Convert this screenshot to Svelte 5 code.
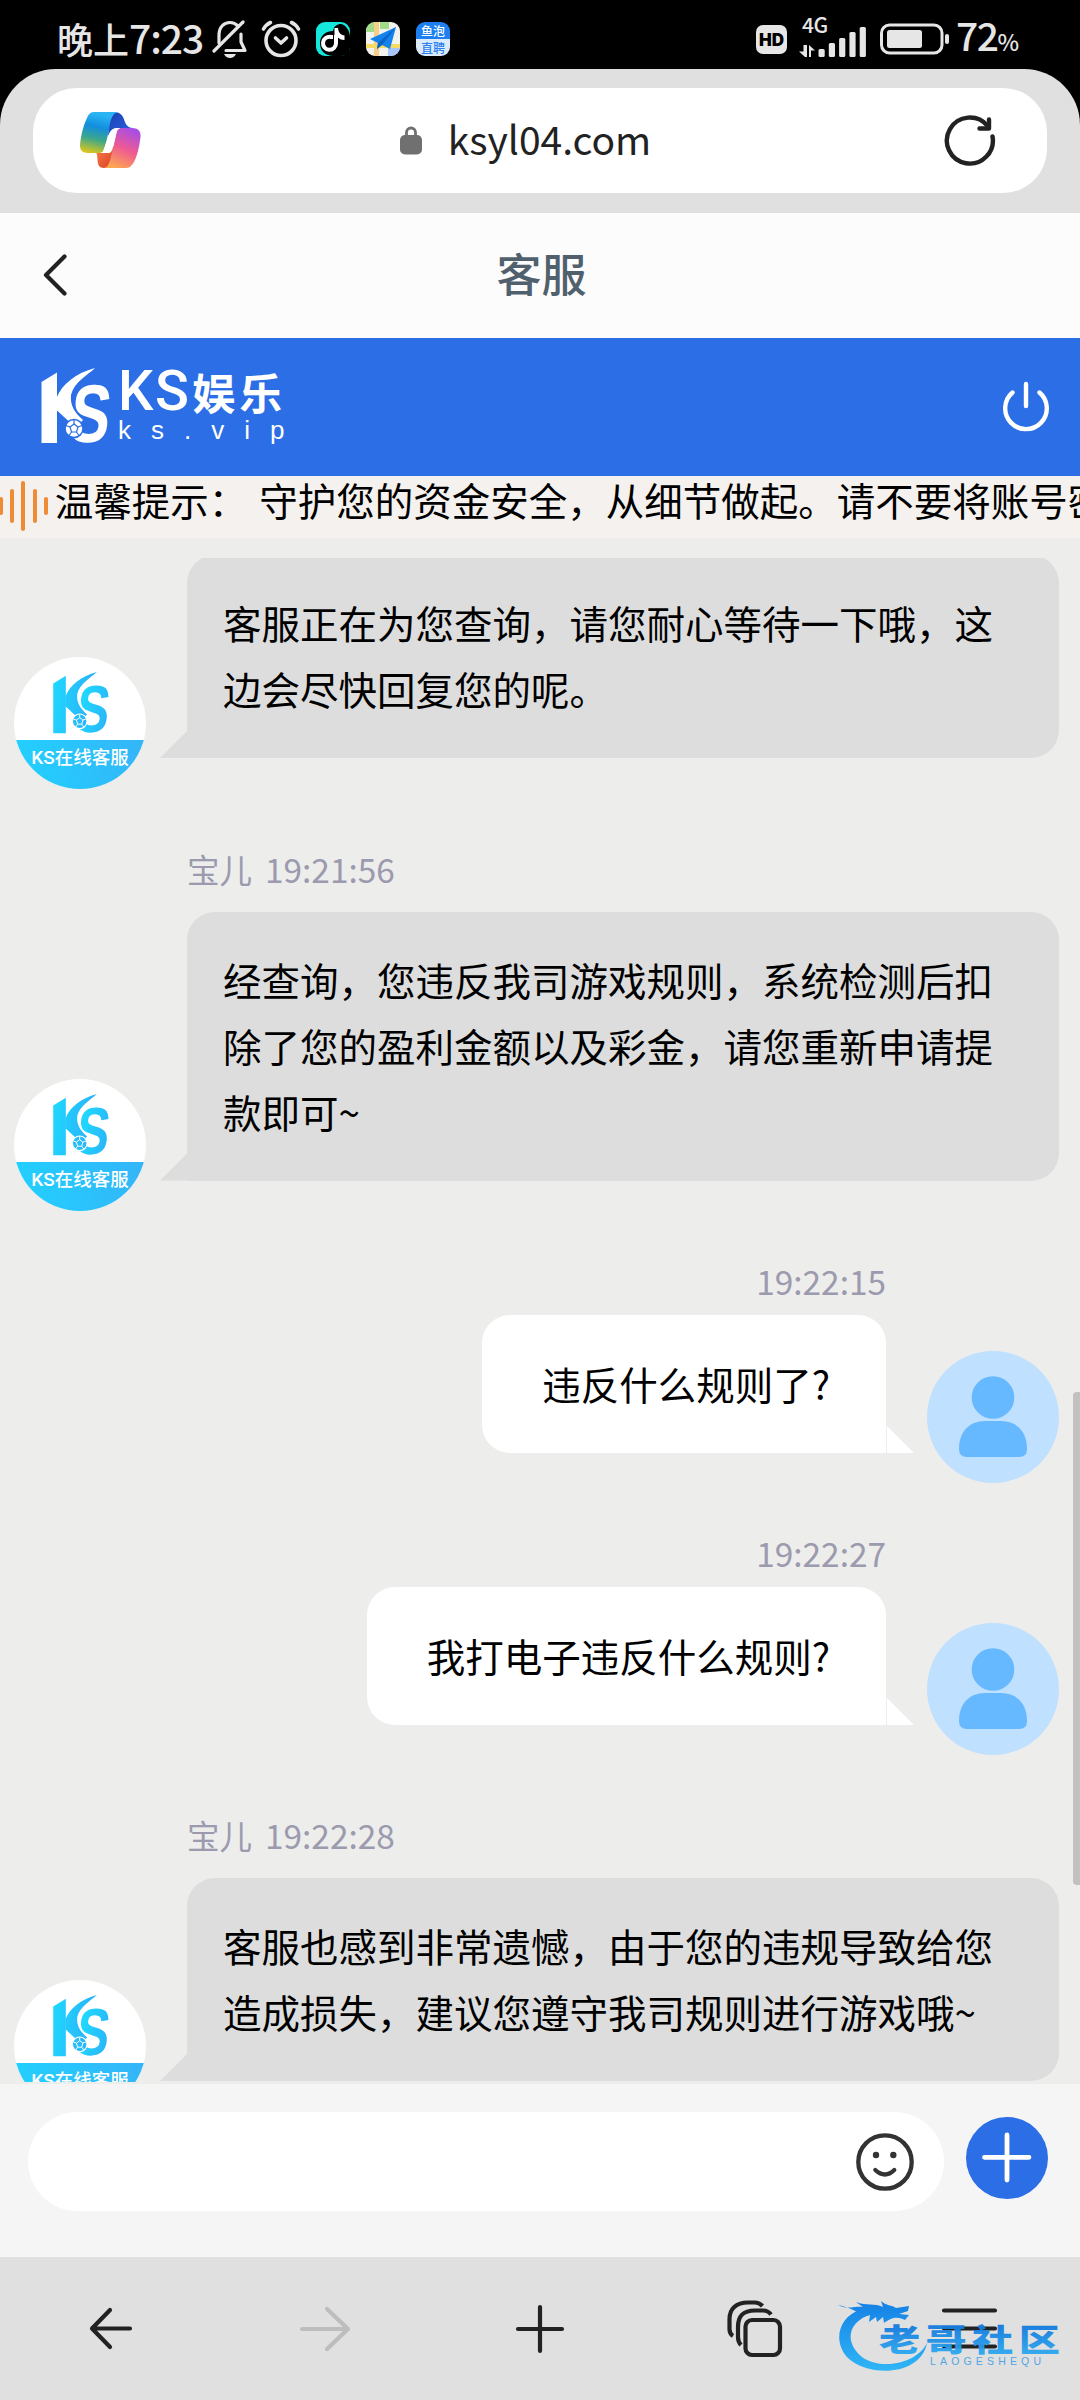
<script>
  const bars = [18, 34, 50, 34, 18];
  const signal = [8, 14, 19, 25, 30];

  let draft = $state("");
  let messages = $state([
    {
      from: "agent",
      text: "客服正在为您查询，请您耐心等待一下哦，这边会尽快回复您的呢。",
    },
    {
      from: "agent",
      name: "宝儿",
      time: "19:21:56",
      text: "经查询，您违反我司游戏规则，系统检测后扣除了您的盈利金额以及彩金，请您重新申请提款即可~",
    },
    { from: "user", time: "19:22:15", text: "违反什么规则了?" },
    { from: "user", time: "19:22:27", text: "我打电子违反什么规则?" },
    {
      from: "agent",
      name: "宝儿",
      time: "19:22:28",
      text: "客服也感到非常遗憾，由于您的违规导致给您造成损失，建议您遵守我司规则进行游戏哦~",
    },
  ]);
</script>

{#snippet logo(fill, edge)}
  <svg class="ks-logo" viewBox="0 0 70 76">
    <defs>
      <linearGradient id="ksBlue" gradientUnits="userSpaceOnUse" x1="0" y1="40" x2="70" y2="50">
        <stop offset="0" stop-color="#20d6ff" />
        <stop offset="1" stop-color="#2fa2f6" />
      </linearGradient>
    </defs>
    <g {fill}>
      <path d="M1.500 14 L17 4.500 V75 H1.500 Z" />
      <path d="M16.500 30 C22 16 36 5 55 0 C48 7 34 14 31 27 C30 37 34 44 43 52 L36 60 L16.500 42 Z" />
      <text
        class="logo-letter"
        transform="translate(27 73.500) skewX(-7) scale(0.74 1)"
        font-size="82"
        stroke={edge}
        stroke-width="3">S</text>
      <circle cx="34" cy="60.500" r="9" stroke={edge} stroke-width="1.500" />
    </g>
    <g fill="none" stroke={edge} stroke-width="1.200">
      <path d="M34 56 L38 59 L36.500 64 H31.500 L30 59 Z" />
      <path d="M34 56 V52 M38 59 L42 57.500 M36.500 64 L39 67.500 M31.500 64 L29 67.500 M30 59 L26 57.500" />
    </g>
  </svg>
{/snippet}

<div class="phone">
  <div class="status">
    <div class="status-left">
      <span class="clock"><span class="clock-cn">晚上</span>7:23</span>
      <svg class="bell" width="36" height="40" viewBox="0 0 36 40">
        <g fill="none" stroke="#e6e6e6" stroke-width="3.2" stroke-linecap="round" stroke-linejoin="round">
          <path d="M7 24 V16 C7 8 12 3.5 18 3.5 C21 3.5 24 5 26 7" />
          <path d="M29 15 V23 L33 31.500 H14" />
          <path d="M2 32 L31 3" />
        </g>
        <path d="M12 35 H24 Q22 39 18 39 Q14 39 12 35 Z" fill="#e6e6e6" />
      </svg>
      <svg class="alarm" width="40" height="40" viewBox="0 0 40 40">
        <g fill="none" stroke="#e6e6e6" stroke-width="3.6" stroke-linecap="round">
          <circle cx="20" cy="21.500" r="15" />
          <path d="M14.500 19 L20 24 L25.500 19" stroke-linejoin="round" />
          <path d="M2.500 10 Q5 5.500 9.500 3.500 M37.500 10 Q35 5.500 30.500 3.500" />
        </g>
      </svg>
      <svg class="tile" width="34" height="34" viewBox="0 0 34 34">
        <rect width="34" height="34" rx="9" fill="#14e8dc" />
        <path
          d="M4 21 C4 14 9 9 17 9 C18 4 21 2 25 2 C30 3 34 9 34 15 V25 Q34 34 25 34 H18 C9 34 4 29 4 21 Z"
          fill="#000" />
        <path
          d="M17 15 H15 A6.500 6.500 0 1 0 20 21 V13"
          fill="none"
          stroke="#fff"
          stroke-width="4" />
        <path d="M18.500 22 V6 H22 C22.500 11 25 13 28.500 13.500 V18 C25 18 23 16.500 22 15.500 V22 Z" fill="#fff" />
      </svg>
      <svg class="tile" width="34" height="34" viewBox="0 0 34 34">
        <clipPath id="mapTile"><rect width="34" height="34" rx="9" /></clipPath>
        <g clip-path="url(#mapTile)">
          <rect width="34" height="34" fill="#f2f2ee" />
          <rect width="9" height="10" fill="#9fdd87" />
          <rect x="14" width="9" height="7" fill="#9fdd87" />
          <rect x="8" width="5" height="34" fill="#f8cf86" />
          <rect y="22" width="34" height="4" fill="#f8dc62" />
          <rect x="22" y="26" width="12" height="8" fill="#a6c6fa" />
          <path d="M30 5 L4 17 L12 21 L11 27 L16 23 L24 27 Z" fill="#1583ee" />
          <path d="M30 5 L12 21 L11 27 L16 23 Z" fill="#0966c8" />
        </g>
      </svg>
      <div class="job-tile">
        <span>鱼泡</span>
        <span>直聘</span>
      </div>
    </div>
    <div class="status-right">
      <span class="hd">HD</span>
      <div class="network">
        <span class="net-type">4G</span>
        <svg width="68" height="36" viewBox="0 0 68 36">
          <path d="M6 24 H8 V36 H6 L0 30.500 H4.500 V24 Z M10 24 L16 29.500 H12 V36 H10 Z" fill="#e6e6e6" />
          {#each signal as h, i}
            <rect x={19.500 + i * 10.300} y={36 - h} width="6.200" height={h} rx="1.500" fill="#e6e6e6" />
          {/each}
        </svg>
      </div>
      <svg class="battery" width="70" height="32" viewBox="0 0 70 32">
        <rect x="1.500" y="2" width="60.500" height="28" rx="8" fill="none" stroke="#e6e6e6" stroke-width="3" />
        <rect x="7" y="7" width="35" height="18" rx="2.500" fill="#e6e6e6" />
        <rect x="65" y="11" width="4" height="10" rx="2" fill="#e6e6e6" />
      </svg>
      <span class="percent">72<small>%</small></span>
    </div>
  </div>

  <div class="browser">
    <div class="url-bar">
      <svg class="copilot" width="61" height="57" viewBox="0 0 61 57">
        <defs>
          <linearGradient id="cpLeft" x1="0.200" y1="0" x2="0" y2="1">
            <stop offset="0" stop-color="#2ab4f4" />
            <stop offset="0.300" stop-color="#128ede" />
            <stop offset="0.600" stop-color="#3da78a" />
            <stop offset="1" stop-color="#f5cb0a" />
          </linearGradient>
          <linearGradient id="cpRight" x1="0.700" y1="0" x2="0.300" y2="1">
            <stop offset="0" stop-color="#a54ee6" />
            <stop offset="0.500" stop-color="#ef5a92" />
            <stop offset="1" stop-color="#fda851" />
          </linearGradient>
          <linearGradient id="cpTop" x1="0" y1="0" x2="1" y2="1">
            <stop offset="0" stop-color="#1c3fae" />
            <stop offset="1" stop-color="#2a63ea" />
          </linearGradient>
          <linearGradient id="cpBottom" x1="0" y1="0" x2="1" y2="1">
            <stop offset="0" stop-color="#f98546" />
            <stop offset="1" stop-color="#d93d27" />
          </linearGradient>
        </defs>
        <path d="M33 0 C48 0 41 14 52 16 H38 C33 16 31 18 28 24 C29 10 30 3 36 0 Z" fill="url(#cpTop)" />
        <path d="M15 40 C20 42 14 56 24 56 H28 C31 52 33 46 34 34 L29 36 C27 40 26 41 22 41 Z" fill="url(#cpBottom)" />
        <path
          d="M15 0 H38 C33 1 31 6 29.500 14 C28 24 26 32 24 37 C23 40 22 41 19 41 H8 C1 41 0 37 0 33 C1 22 4 12 7 6 C9 1 11 0 15 0 Z"
          fill="url(#cpLeft)" />
        <path
          d="M42 16 H52 C59 16 61 20 60.500 25 C59 37 57 44 54 50 C51 55 49 56 45 56 H24 C28 55 29 52 31 45 L36 23 C37 18 38 16 42 16 Z"
          fill="url(#cpRight)" />
        <path d="M38 16 C32 16 30 19 28 25 L24 37 C23 40 22 41 20 41 H28 C31 41 32 39 33 35 L36 23 C37 18 38 16 41 16 Z" fill="#fff" />
      </svg>
      <div class="address">
        <svg width="22" height="29" viewBox="0 0 22 29">
          <path d="M6.500 11 V6.500 A4.500 4.500 0 0 1 15.500 6.500 V11" fill="none" stroke="#707070" stroke-width="2.800" />
          <rect y="9" width="22" height="19.500" rx="5" fill="#707070" />
        </svg>
        <span>ksyl04.com</span>
      </div>
      <svg class="reload" width="54" height="54" viewBox="0 0 54 54">
        <g fill="none" stroke="#222" stroke-width="4.400" stroke-linecap="round" stroke-linejoin="round">
          <path d="M49.500 22.500 A23 23 0 1 1 44.500 11.800" />
          <path d="M46 5.500 V14.500 H36.500" />
        </g>
      </svg>
    </div>
  </div>

  <div class="title-bar">
    <svg width="24" height="42" viewBox="0 0 24 42">
      <path d="M21.500 2.500 L3 21 L21.500 39.500" fill="none" stroke="#222" stroke-width="4.200" stroke-linecap="round" stroke-linejoin="round" />
    </svg>
    <h1>客服</h1>
  </div>

  <header>
    <div class="brand">
      {@render logo("#fff", "#2b6ee6")}
      <div class="brand-text">
        <strong>KS<b>娱乐</b></strong>
        <span>ks.vip</span>
      </div>
    </div>
    <svg class="power" width="48" height="52" viewBox="0 0 48 52">
      <g fill="none" stroke="#fff" stroke-width="4.400" stroke-linecap="round">
        <path d="M10.500 11.500 A20.800 20.800 0 1 0 37.500 11.500" />
        <path d="M24 3 V25" />
      </g>
    </svg>
  </header>

  <div class="notice">
    <div class="wave">
      {#each bars as h}
        <i style="height: {h}px"></i>
      {/each}
    </div>
    <p>温馨提示：<span>守护您的资金安全，从细节做起。请不要将账号密码</span></p>
  </div>

  <main>
    <div class="messages">
      {#each messages as msg}
        <div class="message {msg.from}">
          {#if msg.time}
            <div class="meta">
              {#if msg.name}<span>{msg.name}</span>{/if}
              <span class="time">{msg.time}</span>
            </div>
          {/if}
          <div class="row">
            {#if msg.from === "agent"}
              <div class="avatar">
                {@render logo("url(#ksBlue)", "#fff")}
                <div class="avatar-name"><span>KS</span>在线客服</div>
              </div>
            {/if}
            <div class="bubble">{msg.text}</div>
            {#if msg.from === "user"}
              <svg class="avatar" viewBox="0 0 132 132">
                <rect width="132" height="132" fill="#bfe0ff" />
                <circle cx="66" cy="46.500" r="21.300" fill="#66b8ff" />
                <path d="M32 98 C32 81 42 70 58 70 H74 C90 70 100 81 100 98 Q100 106 92 106 H40 Q32 106 32 98 Z" fill="#66b8ff" />
              </svg>
            {/if}
          </div>
        </div>
      {/each}
    </div>
    <div class="scrollbar"></div>
  </main>

  <div class="composer">
    <div class="field">
      <input type="text" bind:value={draft} />
      <svg width="60" height="60" viewBox="0 0 60 60">
        <circle cx="30" cy="30" r="26.700" fill="none" stroke="#333" stroke-width="4.300" />
        <circle cx="21" cy="23" r="3.200" fill="#333" />
        <circle cx="38.300" cy="23" r="3.200" fill="#333" />
        <path d="M20.300 38 Q30 47 39.300 38" fill="none" stroke="#333" stroke-width="4.200" stroke-linecap="round" />
      </svg>
    </div>
    <button class="add" aria-label="更多">
      <svg width="82" height="82" viewBox="0 0 82 82">
        <path d="M41 18 V63 M18.500 40.300 H63" stroke="#fff" stroke-width="4.800" stroke-linecap="round" />
      </svg>
    </button>
  </div>

  <nav>
    <svg viewBox="0 0 60 60">
      <path d="M50 29.500 H13 M30 11 L12 29.500 L30 48" />
    </svg>
    <svg viewBox="0 0 60 60" class="off">
      <path d="M7 30 H53 M32 10 L53 30 L32 50" />
    </svg>
    <svg viewBox="0 0 60 60">
      <path d="M30 8 V52 M8 30 H52" />
    </svg>
    <svg viewBox="0 0 60 60">
      <rect x="20.500" y="21" width="34.500" height="35" rx="6.500" />
      <path d="M46 15.500 Q43 11.500 38 11.500 H30 C18 11.500 13 17 13 28 V38 Q13 43 16 46" stroke-linecap="butt" />
      <path d="M37.500 7 Q34 3.500 30 3.500 H23 C11 3.500 4.500 10 4.500 20 V30 Q4.500 35 8 37" stroke-linecap="butt" />
    </svg>
    <svg viewBox="0 0 60 60">
      <path d="M4 11.500 H55 M4 29.500 H55 M4 47.500 H55" />
    </svg>
  </nav>

  <div class="watermark">
    <svg width="226" height="80" viewBox="0 0 226 80">
      <defs>
        <linearGradient id="wm" gradientUnits="userSpaceOnUse" x1="0" y1="5" x2="0" y2="78">
          <stop offset="0" stop-color="#0a7be6" />
          <stop offset="1" stop-color="#27b6f8" />
        </linearGradient>
        <linearGradient id="wmText" x1="0" y1="0" x2="0" y2="1">
          <stop offset="0.200" stop-color="#1278de" />
          <stop offset="1" stop-color="#32b2f3" />
        </linearGradient>
      </defs>
      <g fill="url(#wm)">
        <path d="M24 14 C-3 22 -6 53 15 67 C38 82 83 79 89 48 C78 70 41 75 24 62 C7 48 8 27 34 19 Z" />
        <path
          d="M0 10 C9 15 17 11 25 12 L18 7 C28 11 37 8 45 12 L43 6 C48 11 54 10 58 13 L71 11 L70 16 L61 19 L71 20 L67 25 C58 20 51 24 46 28 L45 22 L39 27 L38 22 L31 27 L32 20 C23 23 20 14 0 10 Z" />
      </g>
      <text class="wm-name" transform="translate(41 56) scale(1.330 1)" fill="url(#wmText)">老哥社区</text>
      <text class="wm-latin" x="92" y="69.500" textLength="111" fill="#4ba3e6">LAOGESHEQU</text>
    </svg>
  </div>
</div>

<style>
  :global(body) {
    background: #000;
  }
  .phone {
    position: relative;
    width: 1080px;
    height: 2400px;
    overflow: hidden;
    display: flex;
    flex-direction: column;
    background: #000;
    color: #000;
    font-family: "Noto Sans CJK SC", "Noto Sans", sans-serif;
  }
  .phone > * {
    flex-shrink: 0;
    box-sizing: border-box;
  }
  svg {
    display: block;
    flex-shrink: 0;
  }

  .status {
    height: 69px;
    padding: 9px 62px 0 57px;
    display: flex;
    justify-content: space-between;
    align-items: center;
    color: #e6e6e6;
  }
  .status-left,
  .status-right {
    display: flex;
    align-items: center;
    height: 60px;
  }
  .clock {
    width: 155px;
    font-size: 39px;
    font-weight: 500;
    line-height: 56px;
    padding-bottom: 4px;
    letter-spacing: -1px;
    white-space: nowrap;
  }
  .clock-cn {
    font-size: 36px;
    letter-spacing: 0;
  }
  .alarm {
    margin-left: 13px;
  }
  .tile {
    margin-left: 15px;
  }
  .tile + .tile {
    margin-left: 16px;
  }
  .job-tile {
    margin-left: 16px;
    width: 34px;
    height: 34px;
    border-radius: 9px;
    overflow: hidden;
    background: linear-gradient(#1d7ff2 50%, #dbebfd 50%);
    color: #fff;
    font-size: 12px;
    font-weight: 500;
    line-height: 17px;
    text-align: center;
  }
  .job-tile span {
    display: block;
  }
  .job-tile span + span {
    color: #2a80ec;
  }
  .hd {
    width: 31px;
    height: 29px;
    border-radius: 7px;
    background: #e6e6e6;
    color: #000;
    font: 900 17px/30px Inter, sans-serif;
    text-align: center;
  }
  .network {
    position: relative;
    margin-left: 12px;
  }
  .net-type {
    position: absolute;
    left: 3px;
    top: -9px;
    font-size: 21px;
    line-height: 24px;
    font-weight: 500;
    letter-spacing: -0.5px;
  }
  .battery {
    margin-left: 13px;
  }
  .percent {
    margin-left: 6px;
    width: 62px;
    font-size: 39px;
    font-weight: 500;
    line-height: 56px;
    padding-bottom: 4px;
    letter-spacing: -1.5px;
    white-space: nowrap;
  }
  .percent small {
    font-size: 23px;
  }

  .browser {
    height: 144px;
    padding: 19px 33px 0;
    background: #e0e0e0;
    border-radius: 56px 56px 0 0;
  }
  .url-bar {
    height: 105px;
    padding: 0 50px 0 47px;
    box-sizing: border-box;
    border-radius: 44px;
    background: #fff;
    display: flex;
    align-items: center;
    justify-content: space-between;
  }
  .address {
    display: flex;
    align-items: center;
    gap: 26px;
    margin-right: 33px;
    color: #222;
    font-size: 39px;
    line-height: 60px;
  }
  .address span {
    padding-bottom: 6px;
  }

  .title-bar {
    height: 125px;
    padding: 0 0 1px 43px;
    background: #fcfcfc;
    display: grid;
    grid-template-columns: 24px 1fr 64px;
    align-items: center;
  }
  .title-bar h1 {
    margin: 0;
    padding-bottom: 5px;
    color: #51606d;
    font-size: 45px;
    font-weight: 500;
    line-height: 60px;
    text-align: center;
  }

  header {
    height: 138px;
    padding: 0 30px 3px 40px;
    background: #2b6ee6;
    display: flex;
    align-items: center;
    justify-content: space-between;
    color: #fff;
  }
  .power {
    margin-top: 3px;
  }
  .brand {
    display: flex;
    align-items: center;
    gap: 8px;
  }
  .brand .ks-logo {
    width: 70px;
    height: 76px;
  }
  .brand-text strong {
    display: block;
    font: 500 56px/48px Roboto, sans-serif;
    letter-spacing: 1.5px;
    white-space: nowrap;
  }
  .brand-text b {
    margin-left: 2px;
    font: 700 43px/48px "Noto Sans CJK SC", sans-serif;
    letter-spacing: 4px;
  }
  .brand-text span {
    display: block;
    font: 26px/30px "Liberation Sans", sans-serif;
    letter-spacing: 20px;
  }
  .logo-letter {
    font-family: "Liberation Sans", sans-serif;
    font-weight: 700;
    paint-order: stroke;
  }
  .ks-logo {
    overflow: visible;
  }

  .notice {
    height: 62px;
    background: #f4f1ee;
    display: flex;
    overflow: hidden;
  }
  .wave {
    display: flex;
    align-items: center;
    gap: 7.2px;
    height: 60px;
    margin-left: -1px;
  }
  .wave i {
    width: 4px;
    border-radius: 2px;
    background: #ef8b35;
  }
  .notice p {
    margin: 0 0 0 7px;
    font-size: 38.5px;
    line-height: 46px;
    white-space: nowrap;
  }
  .notice p span {
    margin-left: 12px;
  }

  main {
    position: relative;
    height: 1546px;
    padding: 20px 0 2px;
    background: #ededeb;
  }
  .messages {
    height: 1524px;
    overflow: hidden;
  }
  .message:first-child {
    margin-top: -3px;
  }
  .meta {
    display: flex;
    gap: 13px;
    color: #9b9aae;
    font-size: 32.5px;
    line-height: 48px;
  }
  .time {
    font-size: 33.4px;
  }
  .agent .meta {
    padding: 56px 0 19px 187px;
  }
  .user .meta {
    padding: 46px 194px 10px 0;
    justify-content: flex-end;
  }
  .row {
    display: flex;
    align-items: flex-end;
  }
  .user .row {
    justify-content: flex-end;
  }
  .avatar {
    position: relative;
    width: 132px;
    height: 132px;
    border-radius: 50%;
    overflow: hidden;
    flex-shrink: 0;
  }
  .agent .avatar {
    margin-left: 14px;
    background: #fff;
    display: flex;
    flex-direction: column;
    align-items: center;
    justify-content: space-between;
  }
  .avatar .ks-logo {
    width: 57px;
    height: 62px;
    margin-top: 15px;
  }
  .user .avatar {
    margin: 0 21px 0 41px;
  }
  .avatar-name {
    width: 100%;
    height: 49px;
    background: linear-gradient(75deg, #20d2ff, #35b4f8);
    color: #fff;
    font-size: 18.5px;
    font-weight: 500;
    line-height: 32px;
    text-align: center;
    white-space: nowrap;
  }
  .avatar-name span {
    font-family: Roboto, sans-serif;
    font-size: 19px;
  }
  .bubble {
    position: relative;
    box-sizing: border-box;
    font-size: 38.5px;
    line-height: 66px;
  }
  .agent .bubble {
    width: 872px;
    margin: 0 0 30.5px 41px;
    padding: 34px 36px 37px;
    border-radius: 28px 28px 28px 0;
    background: #ddd;
  }
  .user .bubble {
    margin-bottom: 30px;
    padding: 35px 56px 37px 60px;
    border-radius: 28px 28px 0 28px;
    background: #fff;
  }
  .bubble::after {
    content: "";
    position: absolute;
    bottom: 0;
    width: 27px;
    height: 27px;
  }
  .agent .bubble::after {
    right: 100%;
    background: #ddd;
    clip-path: polygon(100% 0, 100% 100%, 0 100%);
  }
  .user .bubble::after {
    left: calc(100% + 1px);
    background: #fff;
    clip-path: polygon(0 0, 100% 100%, 0 100%);
  }
  .scrollbar {
    position: absolute;
    right: 0;
    top: 854px;
    width: 7px;
    height: 493px;
    border-radius: 4px 0 0 4px;
    background: #c1c1c1;
  }

  .composer {
    height: 173px;
    padding: 28px 32px 0 28px;
    background: #f5f5f5;
    display: flex;
    justify-content: space-between;
    align-items: flex-start;
  }
  .field {
    width: 916px;
    height: 99px;
    padding: 0 29px 0 50px;
    box-sizing: border-box;
    border-radius: 50px;
    background: #fff;
    display: flex;
    align-items: center;
  }
  .field input {
    flex: 1;
    border: none;
    outline: none;
    background: none;
    font: inherit;
    font-size: 38px;
  }
  .add {
    width: 82px;
    height: 82px;
    margin-top: 5px;
    padding: 0;
    border: none;
    border-radius: 50%;
    background: #2b6ee6;
  }

  nav {
    height: 143px;
    padding: 42px 80px 0;
    background: #e0e0e0;
    display: flex;
    justify-content: space-between;
  }
  nav svg {
    width: 60px;
    height: 60px;
    fill: none;
    stroke: #222;
    stroke-width: 4.2;
    stroke-linecap: round;
    stroke-linejoin: round;
  }
  nav .off {
    stroke: #bdbdbd;
  }

  .watermark {
    position: absolute;
    left: 838px;
    top: 2295px;
    opacity: 0.95;
  }
  .wm-name {
    font: 900 31px "Noto Sans CJK SC", sans-serif;
    letter-spacing: 4px;
  }
  .wm-latin {
    font: 10.5px "Liberation Sans", sans-serif;
  }
</style>
